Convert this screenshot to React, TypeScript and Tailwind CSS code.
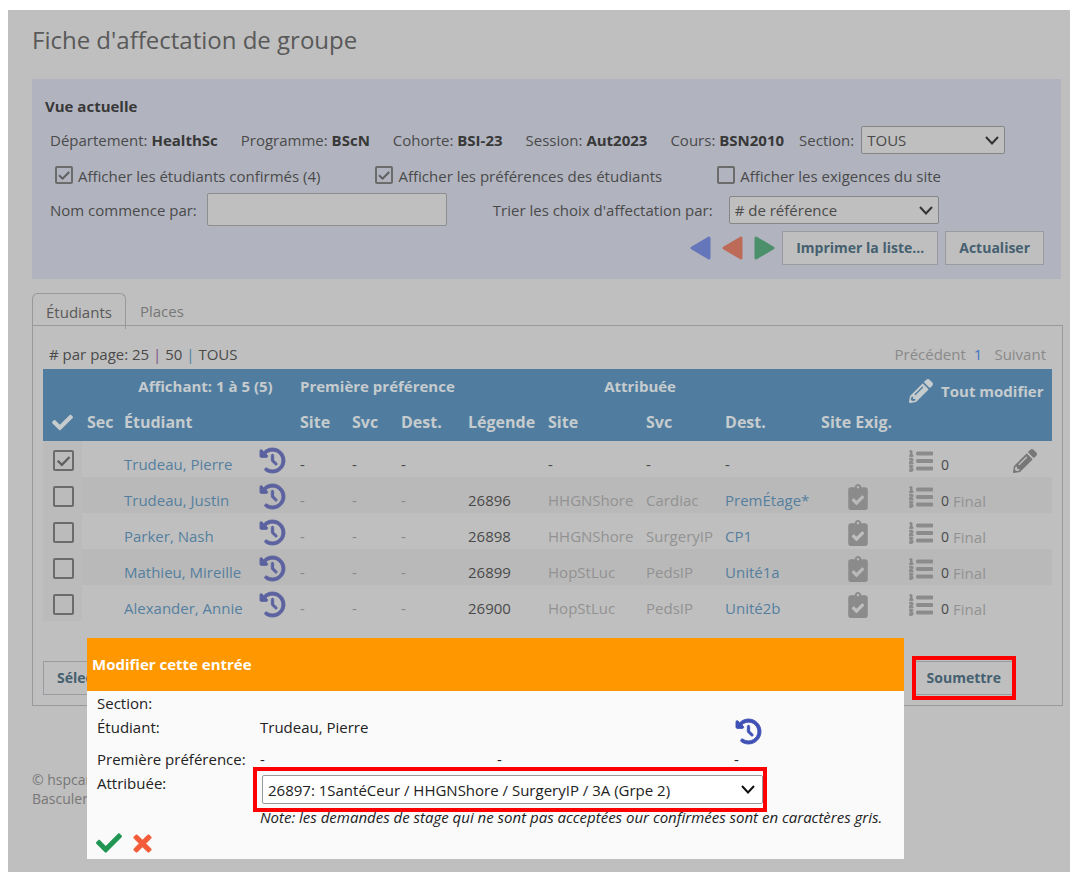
import { useState } from 'react'
import type { ReactNode } from 'react'
import { FaCheck, FaTimes, FaListOl, FaClipboardCheck, FaPencilAlt } from 'react-icons/fa'
import { FaClockRotateLeft } from 'react-icons/fa6'

interface Student {
  name: string
  ref?: string
  site: string
  svc: string
  dest: string
}

const students: Student[] = [
  { name: 'Trudeau, Pierre', site: '-', svc: '-', dest: '-' },
  { name: 'Trudeau, Justin', ref: '26896', site: 'HHGNShore', svc: 'Cardiac', dest: 'PremÉtage*' },
  { name: 'Parker, Nash', ref: '26898', site: 'HHGNShore', svc: 'SurgeryIP', dest: 'CP1' },
  { name: 'Mathieu, Mireille', ref: '26899', site: 'HopStLuc', svc: 'PedsIP', dest: 'Unité1a' },
  { name: 'Alexander, Annie', ref: '26900', site: 'HopStLuc', svc: 'PedsIP', dest: 'Unité2b' },
]

const current = [
  ['Département', 'HealthSc'],
  ['Programme', 'BScN'],
  ['Cohorte', 'BSI-23'],
  ['Session', 'Aut2023'],
  ['Cours', 'BSN2010'],
]

function Chevron({ className }: { className: string }) {
  return (
    <svg viewBox="0 0 14 9" className={`pointer-events-none absolute w-3.5 ${className}`} fill="none" stroke="currentColor" strokeWidth="2">
      <path d="M1 1l6 6.5L13 1" />
    </svg>
  )
}

function Checkbox({ id, label, defaultChecked = false, size }: { id?: string; label?: string; defaultChecked?: boolean; size: string }) {
  return (
    <span className={`relative block shrink-0 ${size}`}>
      <input
        id={id}
        type="checkbox"
        aria-label={label}
        defaultChecked={defaultChecked}
        className="peer block size-full appearance-none rounded-xs border-2 border-[#6b6b6b]"
      />
      <svg viewBox="0 0 18 18" className="pointer-events-none absolute inset-0 hidden size-full text-[#5f5f5f] peer-checked:block" fill="none" stroke="currentColor" strokeWidth="2">
        <path d="M4 9.2l3.6 3.5L14.2 6" />
      </svg>
    </span>
  )
}

function Triangle({ color, label, flip = false }: { color: string; label: string; flip?: boolean }) {
  return (
    <button aria-label={label} className={color}>
      <svg viewBox="0 0 21 24" className={flip ? 'h-6 w-[21px] rotate-180' : 'h-6 w-[21px]'} fill="currentColor" stroke="currentColor" strokeWidth="3" strokeLinejoin="round">
        <path d="M19 2v20L2 12z" />
      </svg>
    </button>
  )
}

function HistoryIcon() {
  return <FaClockRotateLeft className="size-[25px] overflow-visible" strokeWidth={18} stroke="currentColor" />
}

function Button({ children }: { children: ReactNode }) {
  return (
    <button className="h-[34px] border border-[#999ba0] bg-[#bfbfbf] px-[13px] text-sm font-bold text-[#456070]">
      {children}
    </button>
  )
}

export default function App() {
  const [open, setOpen] = useState(true)

  return (
    <div className="bg-white pt-2.5 pb-px pl-2 font-['Open_Sans','Noto_Sans',sans-serif] text-[15px] leading-5 text-[#4a4a4a]">
      <div className="relative bg-[#bfbfbf] pt-3 pr-[7px] pb-16 pl-6">
        <h1 className="mb-[21px] text-2xl leading-9 text-[#595959]">Fiche d'affectation de groupe</h1>

        {/* Current view filters */}
        <section className="mr-0.5 h-[200px] bg-[#b1b4bf] pt-[15px] pr-[17px] pl-[18px]">
          <h2 className="-ml-[5px] leading-6 font-bold text-[#383838]">Vue actuelle</h2>
          <div className="mt-2 flex h-7 items-center gap-[23px] whitespace-nowrap">
            {current.map(([k, v]) => (
              <span key={k}>
                {k}: <b className="text-[#383838]">{v}</b>
              </span>
            ))}
            <span className="-ml-2 flex items-center gap-[7px]">
              <label htmlFor="section">Section:</label>
              <span className="relative">
                <select id="section" className="block h-7 w-36 appearance-none rounded-xs border border-[#85868a] bg-[#bfbfbf] px-[5px]">
                  <option>TOUS</option>
                </select>
                <Chevron className="top-2.5 right-1.5 text-[#333]" />
              </span>
            </span>
          </div>
          <div className="mt-1.5 ml-[5px] flex h-8 items-center gap-[55px] whitespace-nowrap">
            <span className="flex gap-[5px]">
              <Checkbox id="confirmed" defaultChecked size="size-[18px]" />
              <label htmlFor="confirmed">Afficher les étudiants confirmés (4)</label>
            </span>
            <span className="flex gap-[5px]">
              <Checkbox id="prefs" defaultChecked size="size-[18px]" />
              <label htmlFor="prefs">Afficher les préférences des étudiants</label>
            </span>
            <span className="flex gap-[5px]">
              <Checkbox id="reqs" size="size-[18px]" />
              <label htmlFor="reqs">Afficher les exigences du site</label>
            </span>
          </div>
          <div className="mt-px flex h-[33px] items-center whitespace-nowrap">
            <label htmlFor="name" className="mr-2.5">Nom commence par:</label>
            <input id="name" type="text" className="h-[33px] w-60 rounded-xs border border-[#8d8e92] bg-[#bfbfbf] px-2" />
            <label htmlFor="sort" className="mr-4 ml-[46px]">Trier les choix d'affectation par:</label>
            <span className="relative">
              <select id="sort" className="block h-7 w-[210px] appearance-none rounded-xs border border-[#85868a] bg-[#bfbfbf] px-[5px]">
                <option># de référence</option>
              </select>
              <Chevron className="top-2.5 right-1.5 text-[#333]" />
            </span>
          </div>
          <div className="mt-[5px] flex items-center justify-end gap-[7px]">
            <div className="flex gap-[11px]">
              <Triangle color="text-[#6576bb]" label="Premier" />
              <Triangle color="text-[#bd6b58]" label="Reculer" />
              <Triangle color="text-[#4c8f6b]" label="Avancer" flip />
            </div>
            <Button>Imprimer la liste...</Button>
            <Button>Actualiser</Button>
          </div>
        </section>

        {/* Tabs */}
        <nav className="mt-3.5 flex h-8 items-start">
          <button className="h-9 rounded-t-md border border-b-0 border-[#999] px-[13px] text-[#595959]">Étudiants</button>
          <button className="h-9 px-3.5 text-[#777]">Places</button>
        </nav>

        <main className="border border-[#999] px-2.5 pb-2.5">
          <div className="flex h-[43px] items-end justify-between px-1.5 pb-[5px]">
            <span># par page: 25 <span className="text-[#7c4f86]">|</span> 50 <span className="text-[#4b7fa3]">|</span> TOUS</span>
            <span className="flex gap-2 text-[#8a8a8a]">
              <span>Précédent</span>
              <a href="#1" className="text-[#3f74c4]">1</a>
              <span className="ml-1">Suivant</span>
            </span>
          </div>

          <table className="w-full table-fixed text-left whitespace-nowrap [&_td]:pl-[5px] [&_th]:pl-[5px]">
            <colgroup>
              <col className="w-[39px]" />
              <col className="w-[37px]" />
              <col className="w-[136px]" />
              <col className="w-[40px]" />
              <col className="w-[52px]" />
              <col className="w-[49px]" />
              <col className="w-[67px]" />
              <col className="w-[80px]" />
              <col className="w-[98px]" />
              <col className="w-[79px]" />
              <col className="w-[96px]" />
              <col className="w-[88px]" />
              <col className="w-[102px]" />
              <col className="w-[46px]" />
            </colgroup>
            <thead className="bg-[#507d9f] text-[#c6cbce]">
              <tr className="h-9 [&>th]:pb-0.5">
                <th colSpan={2} />
                <th colSpan={2} className="pr-2 text-center">Affichant: 1 à 5 (5)</th>
                <th colSpan={3}>Première préférence</th>
                <th colSpan={4} className="pr-1 text-center">Attribuée</th>
                <th />
                <th colSpan={2} className="pt-2.5">
                  <button className="flex items-center gap-2 font-bold">
                    <FaPencilAlt className="size-6" />
                    Tout modifier
                  </button>
                </th>
              </tr>
              <tr className="h-9 text-base [&>th]:pb-0.5">
                <th><FaCheck className="ml-1 size-[21px]" aria-label="Choisir" /></th>
                <th>Sec</th>
                <th colSpan={2}>Étudiant</th>
                <th>Site</th>
                <th>Svc</th>
                <th>Dest.</th>
                <th>Légende</th>
                <th>Site</th>
                <th>Svc</th>
                <th>Dest.</th>
                <th>Site Exig.</th>
                <th colSpan={2} />
              </tr>
            </thead>
            <tbody>
              {students.map((s) => (
                <tr key={s.name} className="h-9 even:bg-[#b9b9b9] [&>td]:pt-2.5">
                  <td className="bg-[#bbb] pt-[3px]!">
                    <span className="ml-[5px] block">
                      <Checkbox label={s.name} defaultChecked={!s.ref} size="size-[21px]" />
                    </span>
                  </td>
                  <td />
                  <td><a href="#etudiant" className="text-[#557f9f]">{s.name}</a></td>
                  <td className="pt-[3px]!">
                    <button aria-label="Historique" className="block text-[#5b629f]"><HistoryIcon /></button>
                  </td>
                  {[0, 1, 2].map((i) => (
                    <td key={i} className={s.ref ? 'text-[#888]' : ''}>-</td>
                  ))}
                  <td>{s.ref}</td>
                  <td className={s.ref ? 'text-[#929292]' : ''}>{s.site}</td>
                  <td className={s.ref ? 'text-[#929292]' : ''}>{s.svc}</td>
                  <td>{s.ref ? <a href="#dest" className="text-[#557f9f]">{s.dest}</a> : s.dest}</td>
                  <td className="pt-[3px]!">
                    {s.ref && <FaClipboardCheck className="ml-[27px] h-[26px] w-5 text-[#8b8b8b]" />}
                  </td>
                  <td className="pt-[3px]!">
                    <span className="flex items-center">
                      <FaListOl className="mr-2 size-6 text-[#8b8b8b]" strokeWidth={20} stroke="currentColor" />
                      <span className="pt-2 text-sm leading-5">0</span>
                      {s.ref && <span className="pt-2 pl-1 text-[#929292]">Final</span>}
                    </span>
                  </td>
                  <td className="pt-[3px]!">
                    {!s.ref && <button aria-label="Modifier" className="ml-0.5 block text-[#777]"><FaPencilAlt className="size-6" /></button>}
                  </td>
                </tr>
              ))}
            </tbody>
          </table>

          <div className="mt-10 flex justify-between pr-[37px]">
            <Button>Sélectionner</Button>
            <span className="relative">
              <Button>Soumettre</Button>
              <span className="pointer-events-none absolute -inset-x-px -inset-y-[5px] border-4 border-[#ff0000]" />
            </span>
          </div>
        </main>

        <footer className="mt-16 text-sm leading-[19px] text-[#777]">
          <p>© hspcanada</p>
          <p>Basculer</p>
        </footer>

        {/* Edit dialog */}
        {open && (
          <div role="dialog" aria-labelledby="edit-title" className="absolute top-[628px] right-[166px] left-[79px] bg-[#fafafa] text-[#222]">
            <h2 id="edit-title" className="bg-[#ff9800] px-[5px] py-4 leading-[21px] font-bold text-white">Modifier cette entrée</h2>
            <div className="grid grid-cols-[163px_237px_237px_1fr] pl-2.5 whitespace-nowrap">
              <span className="col-span-4 leading-6">Section:</span>
              <span className="leading-6">Étudiant:</span>
              <span className="col-span-2 leading-6">Trudeau, Pierre</span>
              <button aria-label="Historique" className="flex h-8 items-start pt-1 pl-0.5 text-[#3f51b5]"><HistoryIcon /></button>
              <span className="leading-6">Première préférence:</span>
              <span className="leading-6">-</span>
              <span className="leading-6">-</span>
              <span className="leading-6">-</span>
              <label htmlFor="assigned" className="leading-6">Attribuée:</label>
              <div className="col-span-3">
                <div className="relative mt-1 ml-0.5 w-[501px]">
                  <select id="assigned" className="block h-[29px] w-full appearance-none rounded-xs border border-[#999] bg-white px-[5px]">
                    <option>26897: 1SantéCeur / HHGNShore / SurgeryIP / 3A (Grpe 2)</option>
                  </select>
                  <Chevron className="top-2.5 right-2 text-[#111]" />
                  <span className="pointer-events-none absolute -inset-y-2 -right-1 -left-[9px] border-4 border-[#ff0000]" />
                </div>
                <p className="pt-[3px] italic">Note: les demandes de stage qui ne sont pas acceptées our confirmées sont en caractères gris.</p>
              </div>
            </div>
            <div className="flex gap-2 pt-[3px] pb-[3px] pl-[9px]">
              <button aria-label="Accepter" onClick={() => setOpen(false)} className="text-[#219653]"><FaCheck className="size-[26px]" /></button>
              <button aria-label="Annuler" onClick={() => setOpen(false)} className="text-[#f45b39]">
                <FaTimes className="size-[25px]" strokeWidth={20} stroke="currentColor" />
              </button>
            </div>
          </div>
        )}
      </div>
    </div>
  )
}
